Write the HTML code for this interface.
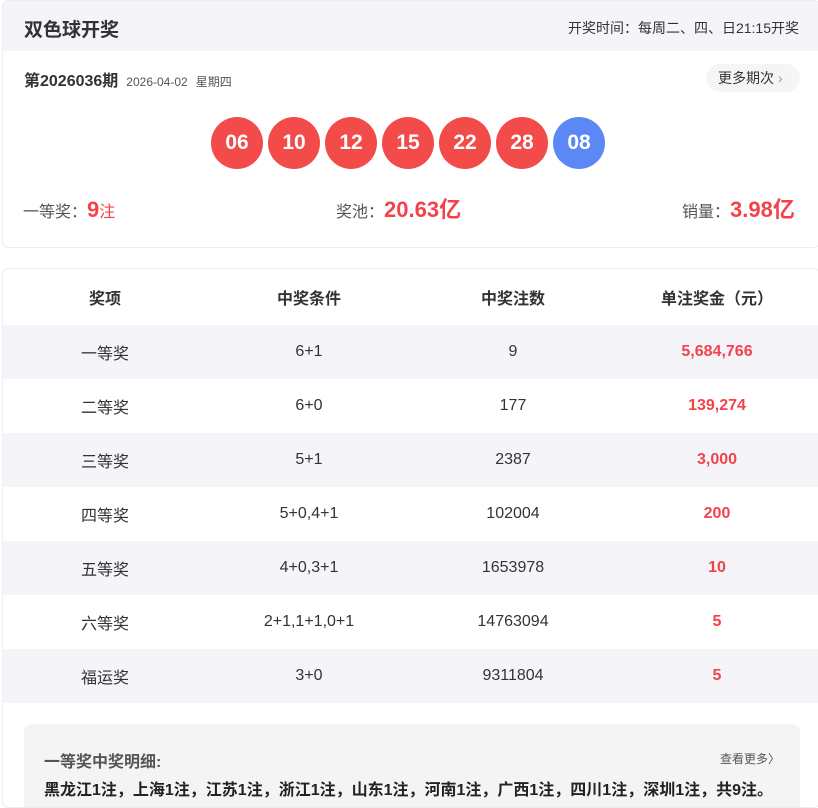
<!DOCTYPE html>
<html><head><meta charset="utf-8"><style>
*{margin:0;padding:0;box-sizing:border-box}
body{width:818px;height:801px;overflow:hidden;background:#fff;font-family:"Liberation Sans","Noto Sans CJK SC",sans-serif;color:#333}
.card1{position:absolute;left:2px;top:0;width:818px;height:248px;border:1px solid #eee;border-radius:6px;overflow:hidden}
.hd{height:50px;background:#f5f5f9;position:relative}
.hd .t{position:absolute;left:21px;top:14px;font-size:19px;font-weight:bold;color:#333}
.hd .r{position:absolute;right:20px;top:17px;font-size:14px;color:#333}
.iss{position:absolute;left:21px;top:66px;font-size:16px;font-weight:bold;color:#333}
.iss span{font-size:12px;font-weight:normal;color:#555;margin-left:8px}
.more{position:absolute;left:703px;top:63px;width:94px;height:28px;border-radius:14px;background:#f5f5f5;font-size:14px;color:#333;line-height:28px;padding-left:12px}
.more i{font-style:normal;color:#999;margin-left:4px}
.ball{position:absolute;top:116px;width:52px;height:52px;border-radius:50%;background:#f34a4a;color:#fff;font-weight:bold;font-size:21px;text-align:center;line-height:52px}
.st{position:absolute;top:194px;height:30px;line-height:30px;font-size:16px;color:#555;white-space:nowrap}
.st b{color:#f3424a;font-size:22px;vertical-align:baseline}
.card2{position:absolute;left:2px;top:268px;width:818px;height:540px;border:1px solid #eee;border-radius:6px;overflow:hidden}
.row{height:54px;display:flex;font-size:16px;align-items:center}
.row.th{height:56px}
.row div{text-align:center}
.c1{width:205px}.c2{width:205px}.c3{width:205px}.c4{width:205px}
.row:nth-child(even){background:#f5f5f9}
.th{font-weight:bold;font-size:16px}
.red{color:#f3424a;font-weight:bold}
.det{position:absolute;left:21px;top:455px;width:776px;height:100px;background:#f4f4f4;border-radius:8px}
.det .a{position:absolute;left:20px;top:24px;font-size:16px;font-weight:bold;color:#555}
.det .b{position:absolute;right:20px;top:26px;font-size:12px;color:#555}
.det .c{position:absolute;left:20px;top:52px;font-size:16px;font-weight:bold;color:#222}
</style></head><body>
<div class="card1">
<div class="hd"><div class="t">双色球开奖</div><div class="r">开奖时间：每周二、四、日21:15开奖</div></div>
<div class="iss">第2026036期<span>2026-04-02</span><span>星期四</span></div>
<div class="more">更多期次<i>›</i></div>
<div class="ball" style="left:208px">06</div>
<div class="ball" style="left:265px">10</div>
<div class="ball" style="left:322px">12</div>
<div class="ball" style="left:379px">15</div>
<div class="ball" style="left:436px">22</div>
<div class="ball" style="left:493px">28</div>
<div class="ball" style="left:550px;background:#5b88f5">08</div>
<div class="st" style="left:20px">一等奖：<b>9</b><span style="color:#f3424a">注</span></div>
<div class="st" style="left:333px">奖池：<b>20.63亿</b></div>
<div class="st" style="left:679px">销量：<b>3.98亿</b></div>
</div>
<div class="card2">
<div class="row th"><div class="c1">奖项</div><div class="c2">中奖条件</div><div class="c3">中奖注数</div><div class="c4">单注奖金（元）</div></div>
<div class="row"><div class="c1">一等奖</div><div class="c2">6+1</div><div class="c3">9</div><div class="c4 red">5,684,766</div></div>
<div class="row"><div class="c1">二等奖</div><div class="c2">6+0</div><div class="c3">177</div><div class="c4 red">139,274</div></div>
<div class="row"><div class="c1">三等奖</div><div class="c2">5+1</div><div class="c3">2387</div><div class="c4 red">3,000</div></div>
<div class="row"><div class="c1">四等奖</div><div class="c2">5+0,4+1</div><div class="c3">102004</div><div class="c4 red">200</div></div>
<div class="row"><div class="c1">五等奖</div><div class="c2">4+0,3+1</div><div class="c3">1653978</div><div class="c4 red">10</div></div>
<div class="row"><div class="c1">六等奖</div><div class="c2">2+1,1+1,0+1</div><div class="c3">14763094</div><div class="c4 red">5</div></div>
<div class="row"><div class="c1">福运奖</div><div class="c2">3+0</div><div class="c3">9311804</div><div class="c4 red">5</div></div>
<div class="det"><div class="a">一等奖中奖明细:</div><div class="b">查看更多〉</div><div class="c">黑龙江1注，上海1注，江苏1注，浙江1注，山东1注，河南1注，广西1注，四川1注，深圳1注，共9注。</div></div>
</div>
</body></html>
